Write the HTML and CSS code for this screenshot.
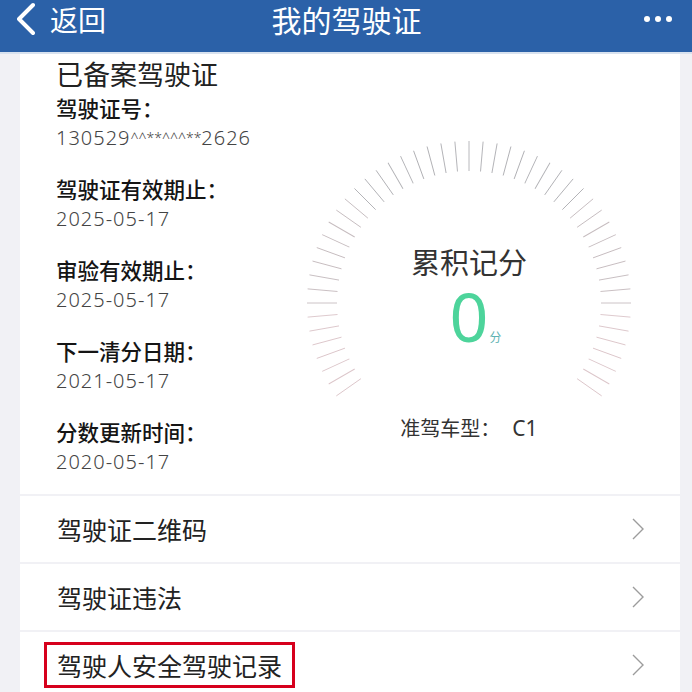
FILE: index.html
```html
<!DOCTYPE html>
<html lang="zh-CN">
<head>
<meta charset="utf-8">
<title>我的驾驶证</title>
<link rel="stylesheet" href="styles.css">
</head>
<body>
<header class="topbar">
  <div class="back">
    <svg class="back-icon" width="18" height="34" viewBox="0 0 18 34"><polyline points="16,3 2,17 16,31" fill="none" stroke="#fff" stroke-width="4" stroke-linecap="round" stroke-linejoin="round"/></svg>
    <span>返回</span>
  </div>
  <div class="title">我的驾驶证</div>
  <div class="more"><i></i><i></i><i></i></div>
</header>
<main class="content">
  <section class="info-card">
    <div class="info-list">
      <div class="card-title">已备案驾驶证</div>
      <div class="field"><div class="label">驾驶证号：</div><div class="value">130529<span class="mask">^^**^^^**</span>2626</div></div>
      <div class="field"><div class="label">驾驶证有效期止：</div><div class="value">2025-05-17</div></div>
      <div class="field"><div class="label">审验有效期止：</div><div class="value">2025-05-17</div></div>
      <div class="field"><div class="label">下一清分日期：</div><div class="value">2021-05-17</div></div>
      <div class="field"><div class="label">分数更新时间：</div><div class="value">2020-05-17</div></div>
    </div>
    <div class="gauge">
      <svg class="gauge-ticks" width="340" height="340" viewBox="0 0 340 340">
        <g class="t3">
          <line x1="170" y1="8" x2="170" y2="38" transform="rotate(-125 170 170)"/>
          <line x1="170" y1="8" x2="170" y2="38" transform="rotate(-120 170 170)"/>
          <line x1="170" y1="8" x2="170" y2="38" transform="rotate(-115 170 170)"/>
          <line x1="170" y1="8" x2="170" y2="38" transform="rotate(-110 170 170)"/>
          <line x1="170" y1="8" x2="170" y2="38" transform="rotate(-105 170 170)"/>
          <line x1="170" y1="8" x2="170" y2="38" transform="rotate(-100 170 170)"/>
          <line x1="170" y1="8" x2="170" y2="38" transform="rotate(-95 170 170)"/>
          <line x1="170" y1="8" x2="170" y2="38" transform="rotate(95 170 170)"/>
          <line x1="170" y1="8" x2="170" y2="38" transform="rotate(100 170 170)"/>
          <line x1="170" y1="8" x2="170" y2="38" transform="rotate(105 170 170)"/>
          <line x1="170" y1="8" x2="170" y2="38" transform="rotate(110 170 170)"/>
          <line x1="170" y1="8" x2="170" y2="38" transform="rotate(115 170 170)"/>
          <line x1="170" y1="8" x2="170" y2="38" transform="rotate(120 170 170)"/>
          <line x1="170" y1="8" x2="170" y2="38" transform="rotate(125 170 170)"/>
        </g>
        <g class="t2">
          <line x1="170" y1="8" x2="170" y2="38" transform="rotate(-90 170 170)"/>
          <line x1="170" y1="8" x2="170" y2="38" transform="rotate(-85 170 170)"/>
          <line x1="170" y1="8" x2="170" y2="38" transform="rotate(-80 170 170)"/>
          <line x1="170" y1="8" x2="170" y2="38" transform="rotate(-75 170 170)"/>
          <line x1="170" y1="8" x2="170" y2="38" transform="rotate(-70 170 170)"/>
          <line x1="170" y1="8" x2="170" y2="38" transform="rotate(-65 170 170)"/>
          <line x1="170" y1="8" x2="170" y2="38" transform="rotate(-60 170 170)"/>
          <line x1="170" y1="8" x2="170" y2="38" transform="rotate(-55 170 170)"/>
          <line x1="170" y1="8" x2="170" y2="38" transform="rotate(-50 170 170)"/>
          <line x1="170" y1="8" x2="170" y2="38" transform="rotate(50 170 170)"/>
          <line x1="170" y1="8" x2="170" y2="38" transform="rotate(55 170 170)"/>
          <line x1="170" y1="8" x2="170" y2="38" transform="rotate(60 170 170)"/>
          <line x1="170" y1="8" x2="170" y2="38" transform="rotate(65 170 170)"/>
          <line x1="170" y1="8" x2="170" y2="38" transform="rotate(70 170 170)"/>
          <line x1="170" y1="8" x2="170" y2="38" transform="rotate(75 170 170)"/>
          <line x1="170" y1="8" x2="170" y2="38" transform="rotate(80 170 170)"/>
          <line x1="170" y1="8" x2="170" y2="38" transform="rotate(85 170 170)"/>
          <line x1="170" y1="8" x2="170" y2="38" transform="rotate(90 170 170)"/>
        </g>
        <g class="t1">
          <line x1="170" y1="8" x2="170" y2="38" transform="rotate(-45 170 170)"/>
          <line x1="170" y1="8" x2="170" y2="38" transform="rotate(-40 170 170)"/>
          <line x1="170" y1="8" x2="170" y2="38" transform="rotate(-35 170 170)"/>
          <line x1="170" y1="8" x2="170" y2="38" transform="rotate(-30 170 170)"/>
          <line x1="170" y1="8" x2="170" y2="38" transform="rotate(-25 170 170)"/>
          <line x1="170" y1="8" x2="170" y2="38" transform="rotate(-20 170 170)"/>
          <line x1="170" y1="8" x2="170" y2="38" transform="rotate(-15 170 170)"/>
          <line x1="170" y1="8" x2="170" y2="38" transform="rotate(-10 170 170)"/>
          <line x1="170" y1="8" x2="170" y2="38" transform="rotate(-5 170 170)"/>
          <line x1="170" y1="8" x2="170" y2="38"/>
          <line x1="170" y1="8" x2="170" y2="38" transform="rotate(5 170 170)"/>
          <line x1="170" y1="8" x2="170" y2="38" transform="rotate(10 170 170)"/>
          <line x1="170" y1="8" x2="170" y2="38" transform="rotate(15 170 170)"/>
          <line x1="170" y1="8" x2="170" y2="38" transform="rotate(20 170 170)"/>
          <line x1="170" y1="8" x2="170" y2="38" transform="rotate(25 170 170)"/>
          <line x1="170" y1="8" x2="170" y2="38" transform="rotate(30 170 170)"/>
          <line x1="170" y1="8" x2="170" y2="38" transform="rotate(35 170 170)"/>
          <line x1="170" y1="8" x2="170" y2="38" transform="rotate(40 170 170)"/>
          <line x1="170" y1="8" x2="170" y2="38" transform="rotate(45 170 170)"/>
        </g>
      </svg>
      <div class="gauge-label">累积记分</div>
      <div class="gauge-score"><span class="score-num">0<span class="score-unit">分</span></span></div>
      <div class="gauge-type">准驾车型：<span class="type-code">C1</span></div>
    </div>
  </section>
  <nav class="menu">
    <div class="menu-row"><span>驾驶证二维码</span><svg class="chev" width="14" height="24" viewBox="0 0 14 24"><polyline points="2,2 12,12 2,22" fill="none" stroke="#9c9c9c" stroke-width="1.4"/></svg></div>
    <div class="menu-row"><span>驾驶证违法</span><svg class="chev" width="14" height="24" viewBox="0 0 14 24"><polyline points="2,2 12,12 2,22" fill="none" stroke="#9c9c9c" stroke-width="1.4"/></svg></div>
    <div class="menu-row menu-row-marked"><span class="highlight">驾驶人安全驾驶记录</span><svg class="chev" width="14" height="24" viewBox="0 0 14 24"><polyline points="2,2 12,12 2,22" fill="none" stroke="#9c9c9c" stroke-width="1.4"/></svg></div>
  </nav>
</main>
</body>
</html>
```

FILE: styles.css
```css
* { box-sizing: border-box; }

body {
  margin: 0;
  background: #f1f1f5;
  font-family: "Noto Sans CJK SC", "Noto Sans", sans-serif;
  color: #222;
}

.topbar {
  height: 54px;
  background: #2b61a8;
  border-bottom: 2px solid #d8e2ef;
  color: #fff;
  display: grid;
  grid-template-columns: 1fr auto 1fr;
  align-items: start;
  padding: 2px 20px 0 17px;
}

.back {
  display: flex;
  align-items: center;
  height: 34px;
  font-size: 28px;
  gap: 15px;
}

.back-icon { display: block; }

.title {
  font-size: 30px;
  line-height: 34px;
  margin-left: 4px;
}

.more {
  justify-self: end;
  display: flex;
  gap: 5px;
  height: 34px;
  align-items: center;
}

.more i {
  display: block;
  width: 6px;
  height: 6px;
  border-radius: 50%;
  background: #fff;
}

.content {
  padding: 0 12px 0 20px;
}

.info-card {
  background: #fff;
  height: 440px;
  padding: 5px 0 0 36px;
  display: flex;
}

.info-list {
  width: 243px;
  flex: none;
}

.card-title {
  font-size: 27px;
  line-height: 30px;
  color: #222;
  margin-bottom: 4px;
}

.field + .field { margin-top: 21px; }

.label {
  font-size: 21.5px;
  line-height: 30px;
  color: #151515;
  font-weight: 500;
}

.value {
  font-family: "Noto Sans", sans-serif;
  font-size: 20px;
  line-height: 30px;
  color: #444;
  letter-spacing: 1px;
  font-weight: 300;
}

.mask {
  font-size: 14px;
  letter-spacing: 0;
  vertical-align: 2px;
}

.gauge {
  position: relative;
  width: 340px;
  height: 340px;
  margin-top: 74px;
  display: flex;
  flex-direction: column;
  align-items: center;
}

.gauge-ticks {
  position: absolute;
  left: 0;
  top: 0;
}

.gauge-ticks line { stroke-width: 0.9; }
.t1 { stroke: #b0b0b4; }
.t2 { stroke: #c6bcbf; }
.t3 { stroke: #dcc6ca; }

.gauge-label {
  position: relative;
  padding-top: 111px;
  font-size: 29px;
  line-height: 34px;
  color: #333;
}

.gauge-score {
  position: relative;
  margin-top: 4px;
  height: 68px;
}

.score-num {
  position: relative;
  display: inline-block;
  font-family: "Noto Sans", sans-serif;
  font-weight: 400;
  font-size: 68px;
  line-height: 68px;
  color: #4dd49b;
}

.score-unit {
  position: absolute;
  left: 100%;
  bottom: 7px;
  font-family: "Noto Sans CJK SC", sans-serif;
  font-size: 12px;
  line-height: 12px;
  color: #5fb3b3;
  margin-left: 1px;
}

.gauge-type {
  position: relative;
  margin-top: 63px;
  font-size: 20px;
  line-height: 30px;
  color: #333;
}

.type-code {
  font-family: "Noto Sans", sans-serif;
  margin-left: 12px;
  font-size: 21px;
}

.menu {
  display: flex;
  flex-direction: column;
  gap: 2px;
  margin-top: 2px;
}

.menu-row {
  height: 66px;
  background: #fff;
  display: flex;
  align-items: center;
  justify-content: space-between;
  padding: 0 35px 0 37px;
  font-size: 25px;
  color: #222;
}

.menu-row-marked { padding-left: 24px; }

.highlight {
  border: 3px solid #d6001c;
  padding: 3px 10px;
  line-height: 34px;
}

.chev { display: block; }
```
